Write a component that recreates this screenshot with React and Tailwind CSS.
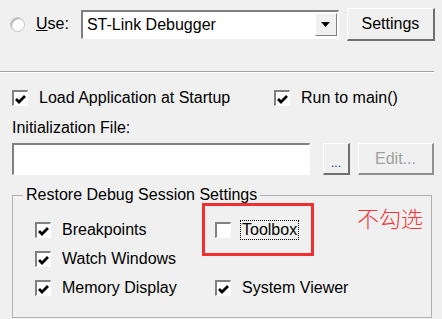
import React from 'react';

const font = { fontFamily: '"Liberation Sans", Arial, sans-serif' };

function Check({ checked, label, focus }) {
  return (
    <div className="flex items-center h-[18px]">
      <div className="w-[16px] h-[16px] border-t-2 border-l-2 border-t-[#808080] border-l-[#808080] border-b border-r border-b-white border-r-white bg-white flex items-center justify-center shrink-0">
        {checked && (
          <svg width="11" height="10" viewBox="0 0 11 10">
            <path d="M1 5 L4 8 L10 2" stroke="#000" strokeWidth="2.8" fill="none" />
          </svg>
        )}
      </div>
      <span
        className={
          'ml-[10px] text-[16px] leading-[18px] text-[#000] px-[1px] ' +
          (focus ? 'outline outline-1 outline-dotted outline-[#000]' : '')
        }
      >
        {label}
      </span>
    </div>
  );
}

export default function App() {
  return (
    <div className="w-[442px] h-[319px] bg-[#f0f0f0] relative overflow-hidden" style={font}>
      {/* Use row */}
      <div className="flex items-center pt-[7px] h-[41px]">
        <div className="ml-[10px] w-[15px] h-[15px] rounded-full bg-white border border-[#c8c8c8] shadow-[inset_1px_1px_1px_#a0a0a0]" />
        <span className="ml-[11px] text-[16px] text-black">
          <span className="underline">U</span>se:
        </span>
        <div className="ml-[12px] w-[258px] h-[29px] bg-white border-t-2 border-l-2 border-[#808080] border-b border-r border-b-white border-r-white flex items-center">
          <span className="flex-1 pl-[4px] text-[16px] text-black">ST-Link Debugger</span>
          <div className="w-[22px] h-[23px] mr-[1px] bg-[#f0f0f0] border-b border-r border-[#808080] border-t border-l border-t-white border-l-white flex items-center justify-center">
            <svg width="9" height="5" viewBox="0 0 9 5">
              <path d="M0 0 H9 L4.5 5 Z" fill="#000" />
            </svg>
          </div>
        </div>
        <button className="ml-[8px] w-[88px] h-[33px] bg-[#f0f0f0] border-t border-l border-t-white border-l-white border-b-2 border-r-2 border-b-[#707070] border-r-[#707070] text-[16px] text-black">
          Settings
        </button>
      </div>

      {/* separator */}
      <div className="mt-[30px] w-[434px] h-[2px] border-t border-t-[#a0a0a0] border-b border-b-white" />

      {/* load / run */}
      <div className="flex items-center mt-[16px]">
        <div className="ml-[12px] w-[262px]">
          <Check checked label="Load Application at Startup" />
        </div>
        <Check checked label="Run to main()" />
      </div>

      <div className="ml-[12px] mt-[12px] text-[16px] text-black leading-[18px]">Initialization File:</div>

      {/* init file row */}
      <div className="flex mt-[6px] h-[32px]">
        <div className="ml-[12px] w-[298px] h-full bg-white border-t-2 border-l-2 border-[#808080] border-b border-r border-b-white border-r-white" />
        <button className="ml-[13px] w-[27px] h-full bg-[#f0f0f0] border-t border-l border-t-white border-l-white border-b-2 border-r-2 border-b-[#707070] border-r-[#707070] text-[12px] leading-none text-[#202080] pt-[8px]">
          ...
        </button>
        <button className="ml-[8px] w-[76px] h-full bg-[#f0f0f0] border-t border-l border-t-white border-l-white border-b-2 border-r-2 border-b-[#909090] border-r-[#909090] text-[16px] text-[#a0a0a0]">
          Edit...
        </button>
      </div>

      {/* group box */}
      <div className="ml-[12px] mt-[20px] w-[420px] h-[123px] border border-[#b0b0b0] relative">
        <span className="absolute left-[10px] top-[-11px] px-[3px] bg-[#f0f0f0] text-[16px] text-black leading-[20px]">
          Restore Debug Session Settings
        </span>
        <div className="grid grid-cols-[180px_1fr] pl-[22px] pt-[25px] gap-y-[11px]">
          <Check checked label="Breakpoints" />
          <Check checked={false} label="Toolbox" focus />
          <Check checked label="Watch Windows" />
          <div />
          <Check checked label="Memory Display" />
          <Check checked label="System Viewer" />
        </div>
      </div>

      {/* annotation */}
      <div className="absolute left-[202px] top-[203px] w-[112px] h-[53px] border-[3px] border-[#f03030]" />
      <div
        className="absolute left-[357px] top-[204px] text-[22px] leading-[26px] text-[#f03838]"
        style={{ fontFamily: '"Noto Sans CJK SC", sans-serif', fontWeight: 300 }}
      >
        不勾选
      </div>
    </div>
  );
}
